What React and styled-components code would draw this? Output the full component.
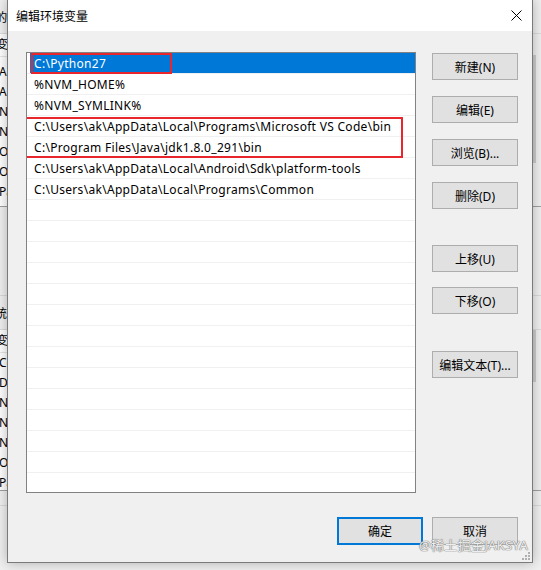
import React from "react";
import styled, { createGlobalStyle } from "styled-components";

const GlobalStyle = createGlobalStyle`
  html, body {
    margin: 0;
    padding: 0;
    background: #f0f0f0;
  }
  body {
    font-family: "Noto Sans", "Noto Sans CJK SC", sans-serif;
    font-size: 12px;
    color: #000;
  }
`;

const UI_FONT = `"Noto Sans", "Noto Sans CJK SC", sans-serif`;

const Desktop = styled.div`
  position: relative;
  width: 541px;
  height: 570px;
  overflow: hidden;
  background: #f0f0f0;
`;

/* ---------- window behind the dialog ---------- */

const BackWindow = styled.div`
  position: absolute;
  left: -60px;
  top: 0;
  width: 640px;
  height: 620px;
  background: #f0f0f0;
  font-family: ${UI_FONT};
  font-size: 12px;
  display: flex;
  flex-direction: column;
`;

const BackLabel = styled.div`
  height: 34px;
  display: flex;
  align-items: center;
  padding-left: ${(p) => p.$indent}px;
  border-bottom: 1px solid #dcdcdc;
  box-sizing: border-box;
  white-space: nowrap;
`;

const BackList = styled.div`
  display: flex;
  background: #fff;
  height: ${(p) => p.$height}px;
  border-bottom: 1px solid #a0a0a0;
`;

const BackRows = styled.div`
  flex: 1;
  display: flex;
  flex-direction: column;
`;

const BackHead = styled.div`
  height: 22px;
  line-height: 22px;
  padding-left: 56px;
  background: #fff;
  border-bottom: 1px solid #e5e5e5;
`;

const BackRow = styled.div`
  height: 20px;
  line-height: 20px;
  padding-left: 59px;
  white-space: nowrap;
`;

const BackScroll = styled.div`
  width: 17px;
  background: #f0f0f0;
  display: flex;
  flex-direction: column;
  padding-top: ${(p) => p.$thumbTop}px;
  padding-left: 4px;
  margin-right: 35px;
  border-left: 1px solid #e0e0e0;
`;

const BackThumb = styled.div`
  width: 8px;
  height: ${(p) => p.$h}px;
  background: #cdcdcd;
`;

const BackGap = styled.div`
  height: ${(p) => p.$h}px;
  border-bottom: 1px solid #dadada;
`;

/* ---------- dialog ---------- */

const Dialog = styled.div`
  position: absolute;
  left: 7px;
  top: -1px;
  width: 526px;
  height: 564px;
  box-sizing: border-box;
  border: 1px solid #7a7a7a;
  background: #f0f0f0;
  box-shadow: 0 0 12px rgba(0, 0, 0, 0.28);
  display: flex;
  flex-direction: column;
  font-family: ${UI_FONT};
`;

const TitleBar = styled.div`
  height: 31px;
  background: #fff;
  display: flex;
  align-items: center;
  justify-content: space-between;
  padding: 0 10px 0 8px;
  flex-shrink: 0;
`;

const Title = styled.span`
  font-size: 12px;
  color: #000;
  padding-top: 1px;
`;

const Close = styled.svg`
  width: 11px;
  height: 11px;
  display: block;
`;

const Client = styled.div`
  flex: 1;
  display: flex;
  flex-direction: column;
  padding: 21px 14px 0 18px;
  position: relative;
`;

const Body = styled.div`
  display: flex;
  gap: 16px;
`;

const ListBox = styled.div`
  position: relative;
  width: 391px;
  height: 441px;
  box-sizing: border-box;
  border: 1px solid #828282;
  background: #fff;
  overflow: hidden;
`;

const Row = styled.div`
  height: 21px;
  box-sizing: border-box;
  border-bottom: 1px solid #f0f0f0;
  display: flex;
  align-items: center;
  padding-left: 3px;
`;

const RowText = styled.div`
  height: 20px;
  line-height: 22px;
  flex: 1;
  padding-left: 4px;
  font-size: 12px;
  letter-spacing: 0.3px;
  white-space: nowrap;
  background: ${(p) => (p.$selected ? "#0078d7" : "transparent")};
  color: ${(p) => (p.$selected ? "#fff" : "#000")};
`;

const Mark = styled.div`
  position: absolute;
  left: ${(p) => p.$x}px;
  top: ${(p) => p.$y}px;
  width: ${(p) => p.$w}px;
  height: ${(p) => p.$h}px;
  box-sizing: border-box;
  border: 2px solid #e8262c;
  pointer-events: none;
`;

const Side = styled.div`
  display: flex;
  flex-direction: column;
  padding-top: 1px;
`;

const Button = styled.button`
  width: 86px;
  height: ${(p) => (p.$tall ? 28 : 27)}px;
  margin-top: ${(p) => p.$top || 0}px;
  box-sizing: border-box;
  background: #e1e1e1;
  border: ${(p) => (p.$default ? "2px solid #0078d7" : "1px solid #adadad")};
  font-family: ${UI_FONT};
  font-size: 12px;
  color: #000;
  padding: 0;
  display: flex;
  align-items: center;
  justify-content: center;
`;

const Footer = styled.div`
  display: flex;
  justify-content: flex-end;
  gap: 9px;
  margin-top: 24px;
`;

const Watermark = styled.div`
  position: absolute;
  right: 4px;
  bottom: 8px;
  font-size: 13px;
  letter-spacing: 0.3px;
  color: rgba(255, 255, 255, 0.9);
  text-shadow: 0 0 1px #777, 0 0 1px #777, 0 0 1px #999;
  white-space: nowrap;
  pointer-events: none;
`;

const Grip = styled.svg`
  position: absolute;
  right: 2px;
  bottom: 2px;
  width: 8px;
  height: 8px;
`;

const userVars = [
  "ANDROID_HOME",
  "ANDROID_SDK_ROOT",
  "NVM_HOME",
  "NVM_SYMLINK",
  "OneDrive",
  "OneDriveConsumer",
  "Path",
];

const sysVars = [
  "ComSpec",
  "DriverData",
  "NUMBER_OF_PROCESSORS",
  "NVM_HOME",
  "NVM_SYMLINK",
  "OS",
  "Path",
];

const paths = [
  "C:\\Python27",
  "%NVM_HOME%",
  "%NVM_SYMLINK%",
  "C:\\Users\\ak\\AppData\\Local\\Programs\\Microsoft VS Code\\bin",
  "C:\\Program Files\\Java\\jdk1.8.0_291\\bin",
  "C:\\Users\\ak\\AppData\\Local\\Android\\Sdk\\platform-tools",
  "C:\\Users\\ak\\AppData\\Local\\Programs\\Common",
];

const rows = [...paths, ...Array(15).fill("")];

const sideButtons = [
  { label: "新建(N)", top: 0 },
  { label: "编辑(E)", top: 16 },
  { label: "浏览(B)...", top: 16 },
  { label: "删除(D)", top: 16 },
  { label: "上移(U)", top: 36 },
  { label: "下移(O)", top: 15 },
  { label: "编辑文本(T)...", top: 37 },
];

const App = () => {
  return (
    <>
      <GlobalStyle />
      <Desktop>
        <BackWindow>
          <BackLabel $indent={39}>ak 的用户变量(U)</BackLabel>
          <BackList $height={172}>
            <BackRows>
              <BackHead>变量</BackHead>
              <BackRow style={{ marginTop: 5 }}>{userVars[0]}</BackRow>
              {userVars.slice(1).map((v) => (
                <BackRow key={v}>{v}</BackRow>
              ))}
            </BackRows>
            <BackScroll $thumbTop={21}>
              <BackThumb $h={108} />
            </BackScroll>
          </BackList>
          <BackGap $h={88} />
          <BackLabel $indent={43}>系统变量(S)</BackLabel>
          <BackList $height={160}>
            <BackRows>
              <BackHead>变量</BackHead>
              {sysVars.map((v) => (
                <BackRow key={v}>{v}</BackRow>
              ))}
            </BackRows>
            <BackScroll $thumbTop={0}>
              <BackThumb $h={52} />
            </BackScroll>
          </BackList>
          <BackGap $h={14} />
        </BackWindow>

        <Dialog>
          <TitleBar>
            <Title>编辑环境变量</Title>
            <Close viewBox="0 0 11 11">
              <path d="M0.5 0.5 L10.5 10.5 M10.5 0.5 L0.5 10.5" stroke="#000" strokeWidth="1" fill="none" />
            </Close>
          </TitleBar>
          <Client>
            <Body>
              <ListBox>
                {rows.map((p, i) => (
                  <Row key={i}>
                    <RowText $selected={i === 0}>{p}</RowText>
                  </Row>
                ))}
                <Mark $x={4} $y={0} $w={141} $h={21} />
                <Mark $x={-5} $y={64} $w={381} $h={41} />
              </ListBox>
              <Side>
                {sideButtons.map((b) => (
                  <Button key={b.label} $top={b.top}>
                    {b.label}
                  </Button>
                ))}
              </Side>
            </Body>
            <Footer>
              <Button $default $tall>确定</Button>
              <Button $tall>取消</Button>
            </Footer>
            <Watermark>@稀土掘金JAKSYA</Watermark>
            <Grip viewBox="0 0 8 8">
              {[
                [6, 0],
                [6, 3],
                [3, 3],
                [6, 6],
                [3, 6],
                [0, 6],
              ].map(([x, y]) => (
                <rect key={`${x}-${y}`} x={x} y={y} width="2" height="2" fill="#b0b0b0" />
              ))}
            </Grip>
          </Client>
        </Dialog>
      </Desktop>
    </>
  );
};

export default App;
